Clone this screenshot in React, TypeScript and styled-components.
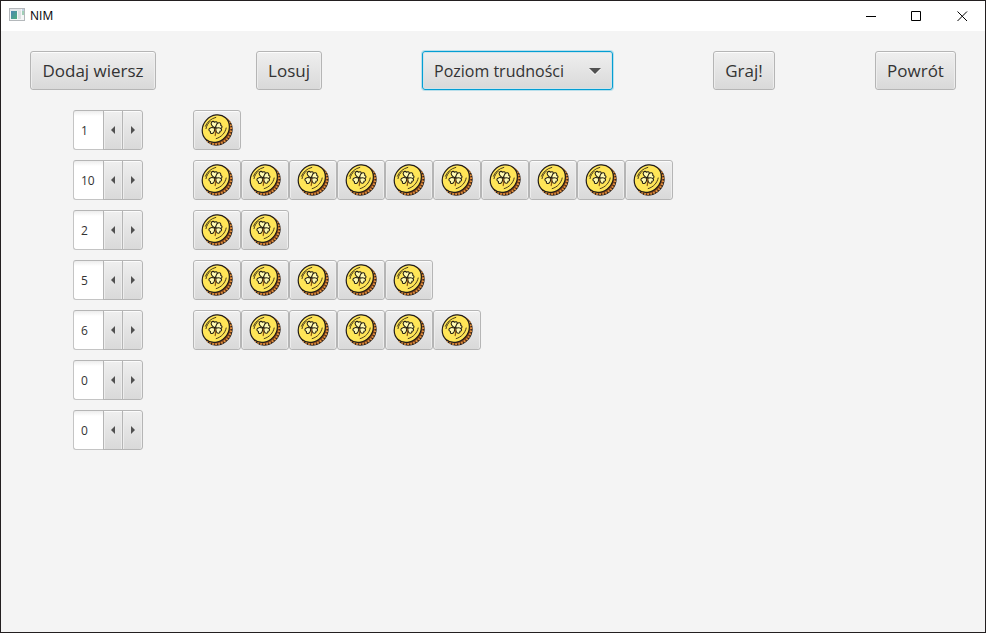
import React, { useState } from "react";
import styled, { createGlobalStyle, css } from "styled-components";

const GlobalStyle = createGlobalStyle`
  * { box-sizing: border-box; }
  body { margin: 0; background: #f4f4f4; font-family: "Open Sans", "Noto Sans", sans-serif; color: #333; }
  button, input, select { font: inherit; color: inherit; margin: 0; }
`;

const raised = css`
  border: 1px solid #b5b5b5;
  border-radius: 3px;
  background: linear-gradient(#efefef, #d9d9d9);
  box-shadow: inset 0 1px #fcfcfc, inset 1px 0 #ededed, inset -1px 0 #ededed;
`;

const Window = styled.div`
  min-height: 100vh;
  display: flex;
  flex-direction: column;
  border: 1px solid #231f20;
  background: #f4f4f4;
`;

const TitleBar = styled.header`
  height: 30px;
  display: flex;
  align-items: center;
  padding-left: 8px;
  background: #fff;
  color: #000;
`;

const Title = styled.h1`
  flex: 1;
  margin: 0 0 0 5px;
  font-size: 12px;
  font-weight: 400;
  line-height: 16px;
`;

const CaptionButton = styled.button`
  width: 46px;
  height: 30px;
  padding: 0;
  border: 0;
  background: transparent;
  display: grid;
  place-items: center;
`;

const Toolbar = styled.nav`
  display: flex;
  justify-content: space-between;
  padding: 20px 29px;
  font-size: 17px;
  line-height: 24px;
`;

const ActionButton = styled.button<{ $width: number }>`
  ${raised}
  width: ${(p) => p.$width}px;
  height: 39px;
  padding: 0;
  white-space: nowrap;
`;

const ComboBox = styled.label`
  display: grid;
  align-items: center;
  width: 191px;
  height: 39px;

  > * { grid-area: 1 / 1; }
  > svg { justify-self: end; margin-right: 12px; pointer-events: none; }
`;

const Select = styled.select`
  appearance: none;
  width: 100%;
  height: 100%;
  padding: 0 30px 0 11px;
  border: 1px solid #039ed3;
  border-radius: 3px;
  outline: none;
  background: linear-gradient(#efefef, #d9d9d9);
  box-shadow: 0 0 0 1px #b9dfeb, inset 0 0 0 1px #cfe3ea;
  font-size: 16px;
`;

const Board = styled.main`
  display: flex;
  flex-direction: column;
  gap: 10px;
  padding: 0 29px 20px 72px;
`;

const Row = styled.div`
  display: flex;
  align-items: center;
  gap: 50px;
`;

const Spinner = styled.div`
  flex: none;
  display: flex;
  width: 70px;
  height: 40px;
  font-size: 12px;
`;

const SpinnerField = styled.input`
  width: 30px;
  height: 40px;
  padding: 0 0 0 7px;
  border: 1px solid #c4c4c4;
  border-top-color: #b5b5b5;
  border-right: 0;
  border-radius: 3px 0 0 3px;
  outline: none;
  background: linear-gradient(#ededed, #fff 5px);
`;

const StepButton = styled.button<{ $last?: boolean }>`
  ${raised}
  width: ${(p) => (p.$last ? 21 : 20)}px;
  height: 40px;
  margin-left: ${(p) => (p.$last ? -1 : 0)}px;
  padding: 0;
  border-radius: ${(p) => (p.$last ? "0 3px 3px 0" : "0")};
  display: grid;
  place-items: center;
`;

const Pile = styled.div`
  display: flex;
`;

const CoinButton = styled.button`
  ${raised}
  width: 48px;
  height: 40px;
  padding: 0;
  display: grid;
  place-items: center;
`;

function AppIcon() {
  return (
    <svg width="16" height="16" viewBox="0 0 16 16" aria-hidden="true">
      <defs>
        <linearGradient id="pane" x1="0" y1="0" x2="1" y2="1">
          <stop offset="0" stopColor="#4d86b3" />
          <stop offset="1" stopColor="#4fae7c" />
        </linearGradient>
      </defs>
      <rect x="0.5" y="0.5" width="15" height="12" fill="#f5f6f7" stroke="#b4b8bb" />
      <path d="M1 2h11" stroke="#d5d9dc" />
      <rect x="2" y="3" width="6" height="8" fill="url(#pane)" />
      <rect x="9" y="3" width="3" height="8" fill="#dde0e2" />
      <rect x="13" y="3" width="2" height="4" fill="#a0cfb7" />
      <path d="M13 2h2" stroke="#8aafd0" />
    </svg>
  );
}

function Coin() {
  return (
    <svg width="32" height="32" viewBox="0 0 32 32" aria-hidden="true">
      <ellipse cx="17.4" cy="17.2" rx="14.8" ry="12.6" transform="rotate(-48 17.4 17.2)" fill="#7c431b" stroke="#201b18" strokeWidth="1.3" />
      <ellipse cx="16.5" cy="16.3" rx="14.5" ry="12.9" transform="rotate(-48 16.5 16.3)" fill="none" stroke="#e08e3c" strokeWidth="2.2" strokeDasharray="1.6 1.4" />
      <ellipse cx="14.8" cy="14.6" rx="14.6" ry="12.7" transform="rotate(-48 14.8 14.6)" fill="#ffe558" stroke="#201b18" strokeWidth="1.2" />
      <path d="M4.4 12.2C6 8 10 4.6 14.8 3.4M5 14.6C5.6 11.6 7.2 9 9.2 7.3M25.2 14c-.9 4.8-4.8 9.2-10 10.6" fill="none" stroke="#342915" strokeWidth=".9" strokeLinecap="round" />
      <g fill="#fffab0" stroke="#211c12" strokeWidth="1.05" strokeLinejoin="round">
        <path d="M14 13.8C10.8 12.4 9.4 9.8 10.5 8.2c.8-1.2 2.4-1 3 .1 1-1 2.6-.6 2.8.7.3 1.7-.8 3.4-2.3 4.8Z" />
        <path d="M14.6 13.8c.3-3.2 2-5.4 3.9-5 1.3.3 1.6 1.6 1.1 2.5 1.2.2 1.8 1.5 1.1 2.5-1 1.5-3.8 1.2-6.1 0Z" />
        <path d="M13.8 14.2c-2.8-1-5.3-.8-5.8 1-.3 1.2.5 2.1 1.5 2.2-.5 1.3.4 2.4 1.7 2.1 1.7-.4 2.4-2.8 2.6-5.3Z" />
        <path d="M14.8 14.2c-.2 2.7.8 5 2.4 5.1 1.2.1 2-.9 1.7-2 1.1.1 2-.9 1.5-2-.6-1.4-3.1-1.7-5.6-1.1Z" />
      </g>
      <path d="M14.4 15c.4 2.4.3 4.8-.2 6.6" fill="none" stroke="#8a5218" strokeWidth="1.1" strokeLinecap="round" />
    </svg>
  );
}

function Arrow({ direction }: { direction: "left" | "right" }) {
  return (
    <svg width="6" height="9" viewBox="0 0 6 9" aria-hidden="true">
      <path d={direction === "left" ? "M5 0v8L1 4Z" : "M1 0v8l4-4Z"} fill="#515151" />
    </svg>
  );
}

export default function App() {
  const [rows, setRows] = useState([1, 10, 2, 5, 6, 0, 0]);
  const setRow = (index: number, value: number) =>
    setRows(rows.map((n, i) => (i === index ? Math.min(10, Math.max(0, value || 0)) : n)));

  return (
    <>
      <GlobalStyle />
      <Window>
        <TitleBar>
          <AppIcon />
          <Title>NIM</Title>
          <CaptionButton aria-label="Minimalizuj">
            <svg width="11" height="11" stroke="#000"><path d="M1 5.5h10" /></svg>
          </CaptionButton>
          <CaptionButton aria-label="Maksymalizuj">
            <svg width="11" height="11" stroke="#000" fill="none"><path d="M.5.5h9v9h-9Z" /></svg>
          </CaptionButton>
          <CaptionButton aria-label="Zamknij">
            <svg width="11" height="11" stroke="#000"><path d="M.5.5l9.5 9.5M10 .5L.5 10" /></svg>
          </CaptionButton>
        </TitleBar>
        <Toolbar>
          <ActionButton $width={126} onClick={() => setRows([...rows, 0])}>Dodaj wiersz</ActionButton>
          <ActionButton $width={66} onClick={() => setRows(rows.map(() => Math.floor(Math.random() * 11)))}>Losuj</ActionButton>
          <ComboBox>
            <Select aria-label="Poziom trudności">
              <option>Poziom trudności</option>
            </Select>
            <svg width="12" height="8" viewBox="0 -1 12 8" aria-hidden="true">
              <path d="M0 1h12L6 7Z" fill="#fff" />
              <path d="M0 0h12L6 6Z" fill="#515151" />
            </svg>
          </ComboBox>
          <ActionButton $width={62}>Graj!</ActionButton>
          <ActionButton $width={81}>Powrót</ActionButton>
        </Toolbar>
        <Board>
          {rows.map((count, index) => (
            <Row key={index}>
              <Spinner>
                <SpinnerField
                  aria-label={`Wiersz ${index + 1}`}
                  inputMode="numeric"
                  value={count}
                  onChange={(e) => setRow(index, Number(e.target.value))}
                />
                <StepButton aria-label="Mniej" onClick={() => setRow(index, count - 1)}><Arrow direction="left" /></StepButton>
                <StepButton $last aria-label="Więcej" onClick={() => setRow(index, count + 1)}><Arrow direction="right" /></StepButton>
              </Spinner>
              <Pile>
                {Array.from({ length: count }, (_, coin) => (
                  <CoinButton key={coin} aria-label={`Moneta ${coin + 1}`} onClick={() => setRow(index, coin)}>
                    <Coin />
                  </CoinButton>
                ))}
              </Pile>
            </Row>
          ))}
        </Board>
      </Window>
    </>
  );
}
